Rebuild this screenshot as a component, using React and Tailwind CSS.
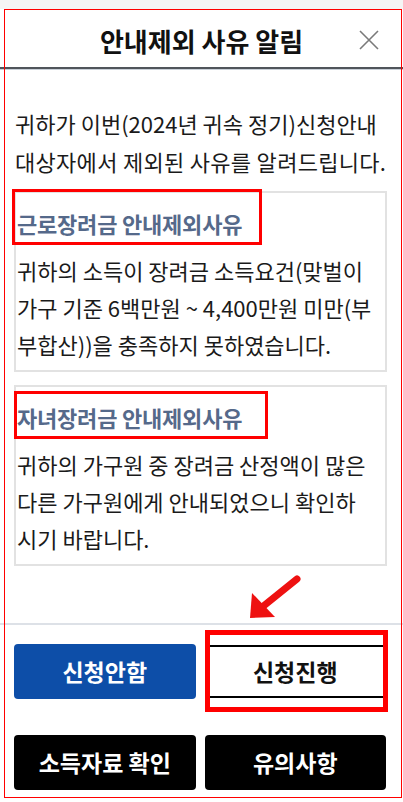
import React from "react";

const font = { fontFamily: '"Noto Sans CJK KR", "Noto Sans", sans-serif' };

function Card({ title, lines }) {
  return (
    <div className="border-2 border-[#e2e2e2] pl-[1px] pr-2 pt-[10px] pb-[7px]">
      <div className="whitespace-nowrap text-[22px] leading-[40px] font-semibold text-[#55698a] tracking-[-0.2px]">{title}</div>
      <div className="mt-[9px] text-[22px] leading-[37px] text-[#1a1a1a]">
        {lines.map((l, i) => (
          <div key={i} className="whitespace-nowrap">{l}</div>
        ))}
      </div>
    </div>
  );
}

export default function App() {
  return (
    <div style={font} className="relative w-[403px] h-[802px] bg-white overflow-hidden">
      <div className="h-[9px] bg-[#f5f5f5]" />
      {/* header */}
      <div className="relative h-[58px] flex items-center justify-center">
        <div className="whitespace-nowrap text-[26px] font-bold text-[#111] pt-[5px]">안내제외 사유 알림</div>
        <svg className="absolute left-[359px] top-[21px]" width="20" height="20" viewBox="0 0 20 20">
          <path d="M1 1 L19 19 M19 1 L1 19" stroke="#7a7a7a" strokeWidth="1.6" fill="none" />
        </svg>
      </div>
      <div className="h-[2px] bg-[#50555b]" />
      <div className="h-[1px] bg-[#c9d0d8]" />

      {/* content */}
      <div className="px-[14px] pt-[34px]">
        <div className="pl-[1px] text-[22px] leading-[38px] text-[#1a1a1a]">
          <div className="whitespace-nowrap">귀하가 이번(2024년 귀속 정기)신청안내</div>
          <div className="whitespace-nowrap tracking-[0.3px]">대상자에서 제외된 사유를 알려드립니다.</div>
        </div>
        <div className="mt-[11px] flex flex-col gap-[13px] w-[373px]">
          <Card
            title="근로장려금 안내제외사유"
            lines={[
              "귀하의 소득이 장려금 소득요건(맞벌이",
              "가구 기준 6백만원 ~ 4,400만원 미만(부",
              "부합산))을 충족하지 못하였습니다.",
            ]}
          />
          <Card
            title="자녀장려금 안내제외사유"
            lines={[
              "귀하의 가구원 중 장려금 산정액이 많은",
              "다른 가구원에게 안내되었으니 확인하",
              "시기 바랍니다.",
            ]}
          />
        </div>
      </div>

      {/* footer */}
      <div className="absolute left-0 right-0 top-[623px]">
        <div className="h-[2px] bg-[#dde1e7]" />
        <div className="px-[14px] pt-[19px] grid grid-cols-2 gap-x-[9px] gap-y-[36px] w-[400px]">
          <button className="h-[55px] rounded-[4px] bg-[#0d4ea8] text-white text-[23px] font-bold">신청안함</button>
          <button className="h-[53px] mt-[1px] bg-white border-y-2 border-black border-x border-x-[#b5b5b5] text-[#111] text-[23px] font-bold">신청진행</button>
          <button className="h-[55px] rounded-[4px] bg-black text-white text-[23px] font-bold">소득자료 확인</button>
          <button className="h-[55px] rounded-[4px] bg-black text-white text-[23px] font-bold">유의사항</button>
        </div>
      </div>

      {/* annotations */}
      <div className="pointer-events-none absolute left-[4px] top-[9px] w-[398px] h-[789px] border-[1.5px] border-[#ff0000]" />
      <div className="pointer-events-none absolute left-[12px] top-[189px] w-[250px] h-[56px] border-[3px] border-[#ff0000]" />
      <div className="pointer-events-none absolute left-[14px] top-[391px] w-[254px] h-[48px] border-[3px] border-[#ff0000]" />
      <div className="pointer-events-none absolute left-[205px] top-[630px] w-[183px] h-[82px] border-[5px] border-[#ff0000]" />
      <svg className="pointer-events-none absolute left-0 top-0" width="403" height="802">
        <line x1="297" y1="579" x2="261" y2="608" stroke="#ee1111" strokeWidth="7" strokeLinecap="round" />
        <polygon points="250,618 252,593 275,617" fill="#ee1111" />
      </svg>
    </div>
  );
}
